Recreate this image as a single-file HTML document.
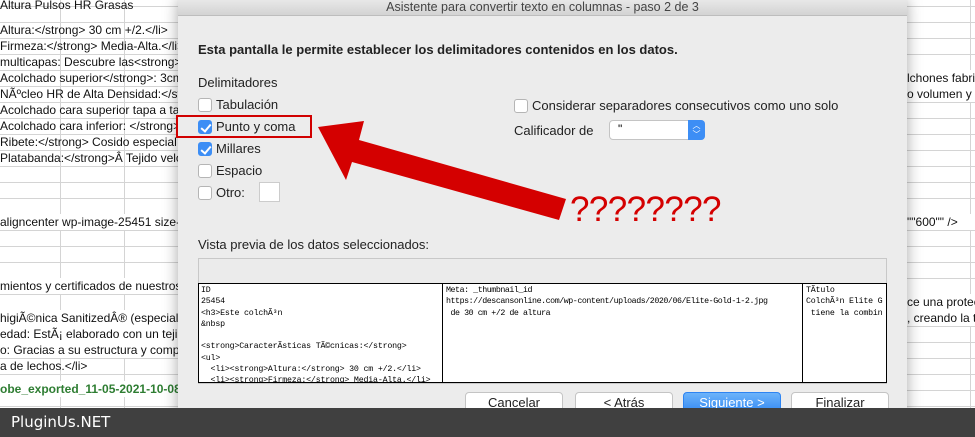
<!DOCTYPE html>
<html><head><meta charset="utf-8"><style>
*{margin:0;padding:0;box-sizing:border-box}
body{width:975px;height:437px;overflow:hidden;position:relative;background:#fff;font-family:"Liberation Sans",sans-serif}
.sheet{position:absolute;top:0;height:408px;background:#fff;overflow:hidden;
background-image:linear-gradient(#d4d4d4 1px,transparent 1px);background-size:100% 16px;background-position:0 6px}
.row{position:absolute;font-size:12px;color:#111;white-space:nowrap;line-height:16px}
.vl{position:absolute;top:0;bottom:0;width:1px;background:#d4d4d4}
.dlg{position:absolute;left:178px;top:0;width:729px;height:420px;background:#ececec;box-shadow:0 0 14px rgba(0,0,0,.35)}
.title{height:16px;background:linear-gradient(#e8e8e8,#d3d3d3);border-bottom:1px solid #bdbdbd;text-align:center;font-size:12.5px;color:#444;line-height:14px}
.t{position:absolute;font-size:13px;color:#222;white-space:nowrap}
.cb{position:absolute;width:14px;height:14px;border:1px solid #b5b5b5;border-radius:3px;background:#fff}
.cb.on{background:#3d8ef5;border-color:#3d8ef5}
.cb.on:after{content:"";position:absolute;left:4px;top:1px;width:4px;height:8px;border:solid #fff;border-width:0 2px 2px 0;transform:rotate(40deg)}
.btn{position:absolute;top:392px;width:98px;height:24px;border:1px solid #c4c4c4;border-radius:4px;background:#fff;font-size:13px;text-align:center;line-height:20px;color:#222}
.col{position:absolute;top:0;bottom:0;overflow:hidden}
.mono{font-family:"Liberation Mono",monospace;font-size:8.3px;line-height:11.3px;color:#000;white-space:pre;padding:1px 0 0 2px;letter-spacing:-0.2px}
</style></head><body>
<div class="sheet" style="left:0;width:178px">
<div class="vl" style="left:60px"></div><div class="vl" style="left:124px"></div>
<div class="row" style="top:-3px;left:0">Altura Pulsos HR Grasas</div>
<div class="row" style="top:22px;left:0">Altura:&lt;/strong&gt; 30 cm +/2.&lt;/li&gt;</div>
<div class="row" style="top:38px;left:0">Firmeza:&lt;/strong&gt; Media-Alta.&lt;/li&gt;</div>
<div class="row" style="top:54px;left:0">multicapas: Descubre las&lt;strong&gt; 10</div>
<div class="row" style="top:70px;left:0">Acolchado superior&lt;/strong&gt;: 3cm de</div>
<div class="row" style="top:86px;left:0">NÃºcleo HR de Alta Densidad:&lt;/stron</div>
<div class="row" style="top:102px;left:0">Acolchado cara superior tapa a tapa:</div>
<div class="row" style="top:118px;left:0">Acolchado cara inferior: &lt;/strong&gt;Te</div>
<div class="row" style="top:134px;left:0">Ribete:&lt;/strong&gt; Cosido especial de s</div>
<div class="row" style="top:150px;left:0">Platabanda:&lt;/strong&gt;Â  Tejido velour</div>
<div class="row" style="top:214px;left:0;background:#fff;width:178px">aligncenter wp-image-25451 size-full</div>
<div class="row" style="top:278px;left:0;background:#fff;width:178px">mientos y certificados de nuestros co</div>
<div class="row" style="top:310px;left:0;background:#fff;width:178px">higiÃ©nica SanitizedÂ® (especialista</div>
<div class="row" style="top:326px;left:0;background:#fff;width:178px">edad: EstÃ¡ elaborado con un tejido</div>
<div class="row" style="top:342px;left:0;background:#fff;width:178px">o: Gracias a su estructura y composic</div>
<div class="row" style="top:358px;left:0">a de lechos.&lt;/li&gt;</div>
<div class="row" style="top:381px;left:0;color:#2e7d32;font-weight:bold;background:#fff;width:178px">obe_exported_11-05-2021-10-08</div>
</div>
<div class="sheet" style="left:907px;width:68px">
<div class="vl" style="left:63px"></div>
<div class="row" style="top:70px;left:0;background:#fff;width:68px">lchones fabric</div>
<div class="row" style="top:86px;left:0;background:#fff;width:68px">o volumen y u</div>
<div class="row" style="top:214px;left:0;background:#fff;width:68px">""600"" /&gt;</div>
<div class="row" style="top:294px;left:0;background:#fff;width:68px">ce una protec</div>
<div class="row" style="top:310px;left:0;background:#fff;width:68px">, creando la te</div>
</div>
<div class="dlg">
<div class="title">Asistente para convertir texto en columnas - paso 2 de 3</div>
<div class="t" style="left:20px;top:42px;font-weight:bold">Esta pantalla le permite establecer los delimitadores contenidos en los datos.</div>
<div class="t" style="left:20px;top:75px">Delimitadores</div>
<div class="cb" style="left:20px;top:98px"></div><div class="t" style="left:38px;top:97px">Tabulación</div>
<div class="cb on" style="left:20px;top:120px"></div><div class="t" style="left:38px;top:119px">Punto y coma</div>
<div style="position:absolute;left:-2px;top:115px;width:136px;height:23px;border:2px solid #d10000"></div>
<div class="cb on" style="left:20px;top:142px"></div><div class="t" style="left:38px;top:141px">Millares</div>
<div class="cb" style="left:20px;top:164px"></div><div class="t" style="left:38px;top:163px">Espacio</div>
<div class="cb" style="left:20px;top:186px"></div><div class="t" style="left:38px;top:185px">Otro:</div>
<div style="position:absolute;left:81px;top:182px;width:21px;height:20px;background:#fff;border:1px solid #ccc"></div>
<div class="cb" style="left:336px;top:99px"></div><div class="t" style="left:354px;top:98px">Considerar separadores consecutivos como uno solo</div>
<div class="t" style="left:336px;top:123px">Calificador de</div>
<div style="position:absolute;left:431px;top:120px;width:96px;height:20px;background:#fff;border:1px solid #c4c4c4;border-radius:4px;font-size:12px;padding-left:8px;line-height:16px">"<div style="position:absolute;right:-1px;top:-1px;width:17px;height:20px;background:#3d8ef5;border-radius:0 4px 4px 0;color:#fff;font-size:8px;line-height:9px;text-align:center;padding-top:1px">︿<br>﹀</div></div>
<div class="t" style="left:20px;top:237px">Vista previa de los datos seleccionados:</div>
<div style="position:absolute;left:20px;top:258px;width:689px;height:126px;border:1px solid #c8c8c8;background:#ebebeb"></div>
<div style="position:absolute;left:20px;top:283px;width:689px;height:100px;background:#fff;border:1px solid #000;overflow:hidden">
<div class="col" style="left:0;width:244px;border-right:1px solid #000"><div class="mono">ID
25454
&lt;h3&gt;Este colchÃ³n
&amp;nbsp

&lt;strong&gt;CaracterÃ­sticas TÃ©cnicas:&lt;/strong&gt;
&lt;ul&gt;
  &lt;li&gt;&lt;strong&gt;Altura:&lt;/strong&gt; 30 cm +/2.&lt;/li&gt;
  &lt;li&gt;&lt;strong&gt;Firmeza:&lt;/strong&gt; Media-Alta.&lt;/li&gt;</div></div>
<div class="col" style="left:245px;width:359px;border-right:1px solid #000"><div class="mono" style="letter-spacing:-0.45px">Meta: _thumbnail_id
https://descansonline.com/wp-content/uploads/2020/06/Elite-Gold-1-2.jpg
 de 30 cm +/2 de altura</div></div>
<div class="col" style="left:605px;width:84px"><div class="mono">TÃ­tulo
ColchÃ³n Elite G
 tiene la combin</div></div>
</div>
<div class="btn" style="left:287px">Cancelar</div>
<div class="btn" style="left:397px">&lt; Atrás</div>
<div class="btn" style="left:505px;background:linear-gradient(#6cb3fa,#2d84f2);border-color:#2d84f2;color:#fff">Siguiente &gt;</div>
<div class="btn" style="left:613px">Finalizar</div>
</div>
<svg style="position:absolute;left:0;top:0" width="975" height="437"><polygon fill="#d40000" points="318,127 364,121 359,140 566,199 559,220 352,162 346,180" /></svg>
<div style="position:absolute;left:570px;top:190px;font-size:35px;color:#d40000;letter-spacing:-0.6px;line-height:40px;font-family:'Liberation Sans',sans-serif">????????</div>
<div style="position:absolute;left:0;top:408px;width:975px;height:29px;background:#404040;color:#fff;font-size:15px;line-height:29px;padding-left:11px;font-family:'DejaVu Sans',sans-serif">PluginUs.NET</div>
</body></html>
